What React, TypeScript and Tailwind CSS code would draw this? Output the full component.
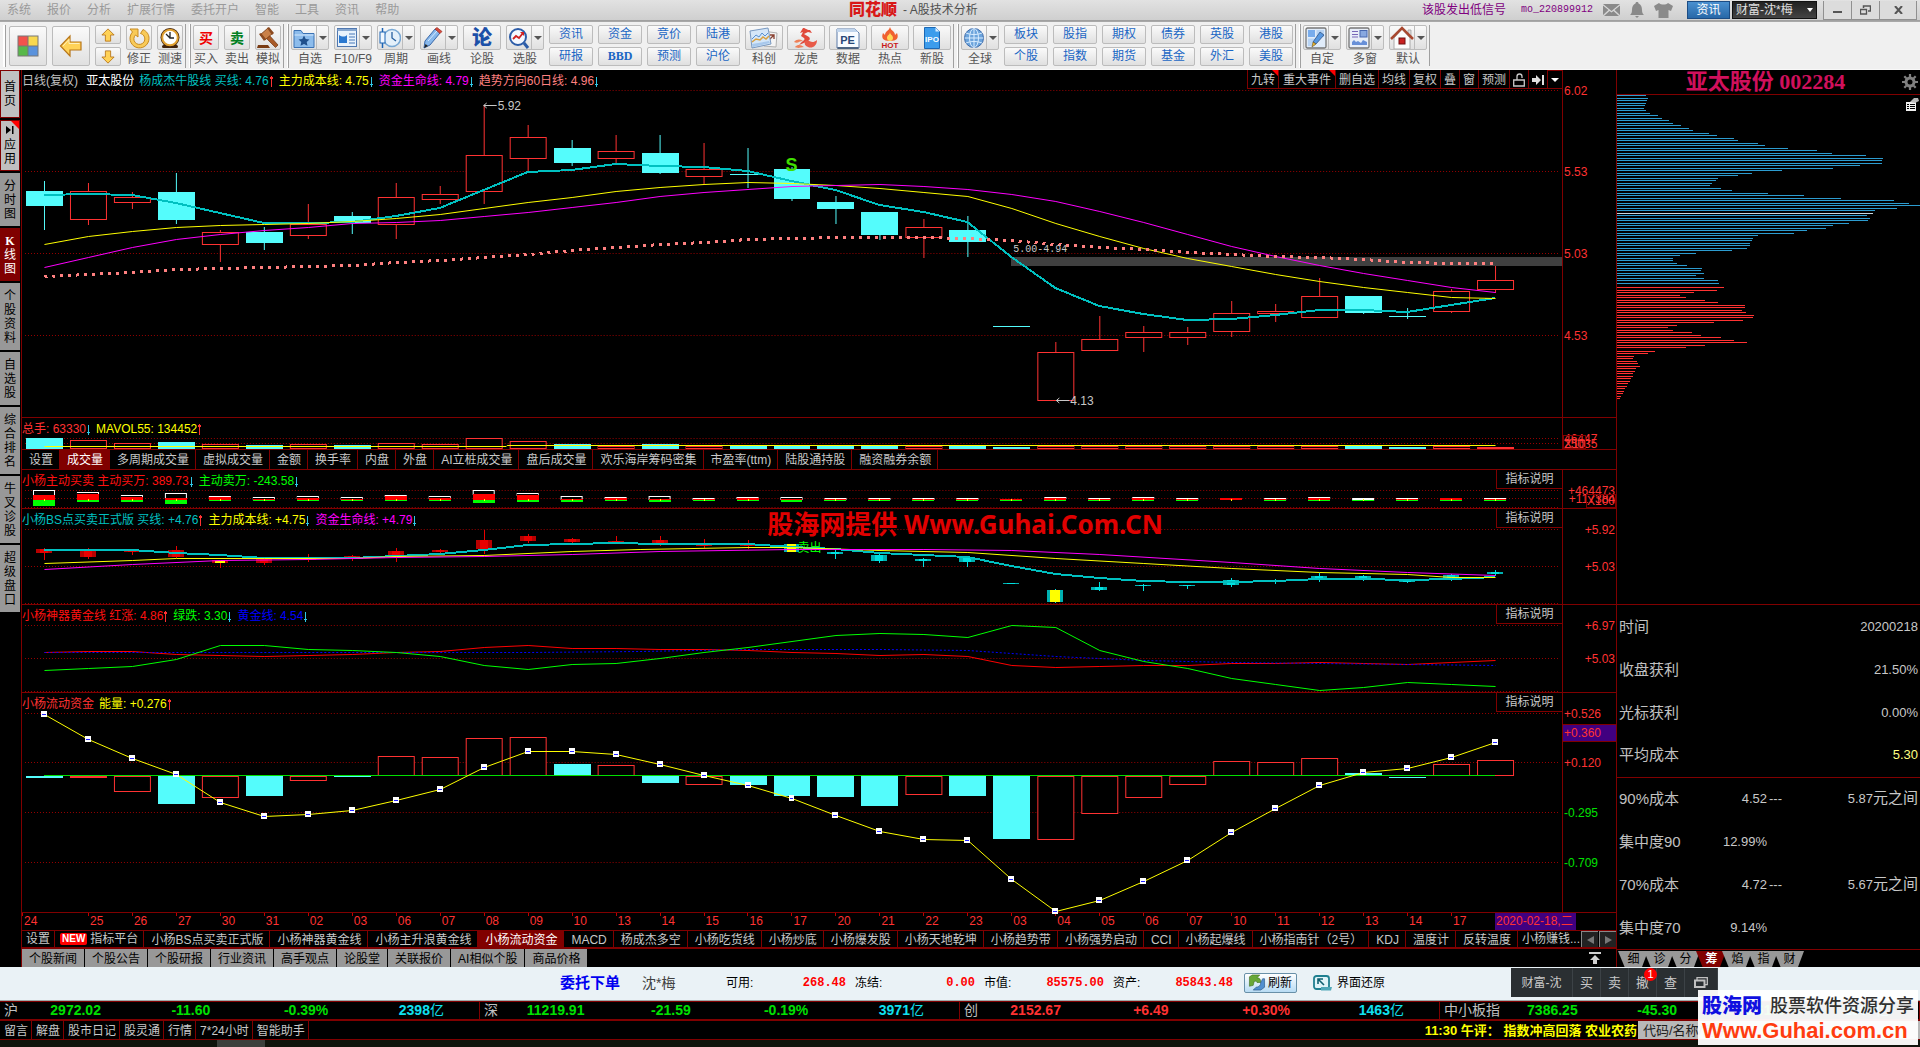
import type { ReactNode } from "react";

type Pt = [number, number];

const CYAN = "#54fcfc";
const TEAL = "#00c0c0";
const RED = "#ff3232";
const PINK = "#ff8080";

const dayX = (i: number) => 44 + 44 * i;
const byDay = (ys: number[]): Pt[] => ys.map((y, i) => [dayX(i), y]);
const toPoints = (pts: Pt[]) => pts.map((p) => p.join(",")).join(" ");

/* ---------- chart data ---------- */

// [high, top, bottom, low, falling]
const candles: [number, number, number, number, number][] = [
  [181, 191, 206, 230, 1], [183, 191, 219, 225, 0], [192, 197, 202, 209, 0], [173, 192, 220, 224, 1],
  [230, 232, 244, 262, 0], [227, 232, 243, 250, 1], [204, 224, 235, 239, 0], [212, 216, 223, 234, 1],
  [183, 197, 224, 239, 0], [186, 194, 199, 204, 0], [105, 155, 191, 204, 0], [125, 137, 158, 172, 0],
  [140, 148, 163, 166, 1], [135, 151, 158, 163, 0], [135, 153, 173, 174, 1], [143, 169, 176, 184, 0],
  [148, 174, 175, 188, 1], [167, 169, 199, 201, 1], [196, 202, 209, 224, 1], [212, 212, 235, 240, 1],
  [219, 227, 237, 258, 0], [216, 230, 242, 257, 1], [326, 326, 327, 327, 1], [342, 352, 400, 400, 0],
  [316, 339, 350, 350, 0], [326, 332, 337, 352, 0], [327, 332, 337, 345, 0], [301, 313, 331, 337, 0],
  [304, 311, 313, 322, 0], [278, 296, 317, 317, 0], [296, 296, 313, 314, 1], [308, 316, 317, 319, 1],
  [289, 291, 311, 313, 0], [266, 280, 289, 293, 0],
];
const priceTeal = byDay([195, 194, 195, 203, 213, 223, 223, 222, 216, 208, 190, 172, 170, 164, 166, 167, 171, 181, 190, 205, 212, 222, 257, 288, 306, 314, 320, 319, 315, 310, 310, 312, 305, 298]);
const priceYellow = byDay([244, 236, 231, 227, 225, 224, 223, 221, 218, 214, 208, 202, 197, 191, 187, 184, 182, 183, 185, 188, 192, 196, 208, 223, 236, 248, 258, 266, 274, 281, 287, 292, 297, 298]);
const priceMagenta = byDay([267, 257, 247, 239, 234, 230, 227, 223, 222, 220, 216, 212, 207, 202, 196, 192, 189, 186, 185, 184, 186, 189, 194, 201, 211, 222, 234, 246, 256, 265, 273, 280, 287, 292]);
const pricePink = byDay([276, 274, 272, 269, 268, 267, 266, 265, 262, 260, 257, 254, 250, 247, 244, 242, 239, 238, 237, 237, 237, 238, 240, 244, 247, 249, 252, 254, 256, 257, 259, 262, 263, 263]);

// [top, falling]
const volumes: Pt[] = [
  [438, 1], [440, 0], [443, 0], [442, 1], [444, 0], [445, 1], [444, 0], [445, 1], [443, 0], [444, 0], [438, 0], [441, 0],
  [444, 1], [446, 0], [444, 1], [446, 0], [446, 1], [446, 1], [446, 1], [446, 1], [446, 0], [446, 1], [447, 1], [446, 0],
  [446, 0], [446, 0], [446, 0], [446, 0], [446, 0], [446, 0], [446, 1], [447, 1], [446, 0], [447, 0],
];

// [outline top, red top, green bottom]
const orders: [number, number, number][] = [
  [490, 495, 506], [492, 494, 502], [495, 497, 502], [493, 498, 504], [496, 497, 501], [497, 499, 501], [496, 498, 501],
  [497, 499, 501], [495, 496, 501], [496, 498, 501], [490, 494, 503], [493, 495, 502], [496, 499, 502], [497, 498, 501],
  [496, 499, 502], [498, 499, 501], [497, 498, 501], [497, 499, 502], [498, 499, 501], [498, 499, 501], [498, 499, 501],
  [498, 499, 501], [499, 499, 501], [497, 498, 501], [498, 499, 501], [497, 498, 501], [498, 499, 501], [498, 498, 500],
  [498, 499, 501], [497, 498, 501], [498, 500, 501], [498, 499, 501], [498, 498, 501], [498, 499, 501],
];

// [high, top, bottom, low]
const bsCandles: [number, number, number, number][] = [
  [548, 549, 553, 560], [548, 550, 557, 559], [551, 551, 552, 555], [546, 550, 557, 558], [560, 560, 563, 568],
  [559, 559, 563, 565], [554, 558, 560, 562], [555, 556, 557, 561], [548, 551, 557, 562], [549, 550, 552, 553],
  [530, 540, 549, 554], [534, 536, 541, 543], [538, 539, 542, 543], [536, 541, 542, 543], [536, 540, 545, 546],
  [539, 545, 546, 548], [540, 545, 546, 549], [543, 544, 552, 553], [550, 552, 554, 559], [553, 555, 561, 563],
  [558, 559, 561, 567], [557, 558, 562, 567], [583, 583, 584, 584], [589, 590, 602, 603], [582, 587, 590, 591],
  [584, 585, 586, 591], [585, 585, 586, 589], [578, 580, 585, 587], [579, 581, 582, 584], [573, 576, 579, 582],
  [575, 576, 579, 581], [581, 581, 582, 583], [574, 575, 578, 581], [570, 572, 574, 576],
];
const bsTeal = byDay([550, 550, 550, 553, 555, 558, 558, 558, 556, 554, 550, 545, 544, 543, 544, 544, 544, 547, 549, 553, 555, 557, 566, 574, 578, 581, 582, 582, 581, 579, 579, 580, 579, 577]);
const bsYellow: Pt[] = [[44, 563], [132, 560], [176, 558], [264, 558], [352, 558], [396, 556], [484, 555], [572, 551], [640, 549], [748, 547], [792, 547], [880, 550], [968, 552], [1056, 558], [1144, 563], [1232, 568], [1320, 572], [1408, 574], [1452, 577], [1496, 577]];
const bsMagenta: Pt[] = [[44, 569], [132, 564], [220, 560], [308, 559], [396, 557], [484, 556], [572, 554], [660, 551], [792, 549], [924, 549], [1012, 550], [1100, 554], [1232, 562], [1320, 568], [1408, 572], [1496, 575]];

const goldRed = byDay([652, 651, 651, 654, 655, 656, 655, 654, 652, 651, 647, 645, 648, 648, 649, 649, 650, 652, 653, 655, 654, 656, 665, 667, 666, 665, 665, 663, 663, 662, 663, 664, 662, 660]);
const goldGreen = byDay([670, 668, 666, 659, 645, 645, 649, 650, 652, 656, 665, 669, 664, 663, 658, 652, 647, 641, 635, 633, 634, 637, 625, 627, 650, 661, 668, 678, 684, 690, 687, 682, 684, 686]);
const goldBlue: Pt[] = [[44, 652], [352, 652], [528, 652], [640, 651], [748, 649], [880, 649], [968, 650], [1012, 653], [1056, 656], [1100, 658], [1144, 660], [1232, 662], [1408, 664], [1496, 665]];

// [top, bottom, falling]
const flows: [number, number, number][] = [
  [776, 778, 1], [776, 777, 0], [776, 791, 0], [776, 804, 1], [776, 797, 0], [776, 796, 1], [776, 780, 0], [776, 777, 1],
  [756, 775, 0], [757, 775, 0], [738, 775, 0], [737, 775, 0], [764, 775, 1], [765, 775, 0], [776, 783, 1], [776, 784, 0],
  [776, 785, 1], [776, 796, 1], [776, 797, 1], [776, 806, 1], [776, 794, 0], [776, 796, 1], [776, 839, 1], [776, 839, 0],
  [776, 813, 0], [776, 797, 0], [776, 784, 0], [761, 775, 0], [762, 775, 0], [758, 775, 0], [773, 775, 1], [777, 778, 1],
  [764, 775, 0], [760, 775, 0],
];
const energy = byDay([714, 739, 758, 774, 802, 816, 814, 810, 800, 789, 767, 751, 751, 754, 764, 775, 785, 798, 815, 831, 839, 840, 879, 911, 900, 881, 860, 832, 808, 785, 772, 768, 757, 742]);

// chip distribution bar lengths, one bar every 5/2 rows
const chipsBlue = [29, 31, 30, 29, 28, 27, 29, 33, 41, 45, 52, 56, 64, 72, 76, 92, 100, 117, 121, 141, 148, 171, 200, 215, 249, 266, 265, 265, 243, 216, 165, 135, 121, 101, 99, 95, 93, 104, 115, 151, 187, 224, 277, 292, 303, 280, 258, 256, 250, 253, 251, 232, 216, 209, 190, 177, 141, 136, 135, 133, 133, 130, 115, 79, 63, 56, 56, 60, 70, 85, 84, 87, 79, 87, 101, 102];
const chipsRed = [107, 100, 77, 63, 69, 88, 101, 128, 128, 125, 129, 137, 136, 126, 97, 60, 51, 56, 75, 84, 104, 117, 130, 88, 69, 38, 31, 17, 16, 20, 21, 23, 19, 18, 16, 16, 14, 13, 11, 10, 8, 7, 6, 4, 3];

const dates = ["24", "25", "26", "27", "30", "31", "02", "03", "06", "07", "08", "09", "10", "13", "14", "15", "16", "17", "20", "21", "22", "23", "03", "04", "05", "06", "07", "10", "11", "12", "13", "14", "17"];

/* ---------- small pieces ---------- */

function Grid({ ys }: { ys: number[] }) {
  return (
    <>
      {ys.map((y) => (
        <line key={y} x1="25" x2="1561" y1={y + 0.5} y2={y + 0.5} stroke="#980000" strokeDasharray="1 2" />
      ))}
    </>
  );
}

// centres the stroke on whole pixel rows so that flat stretches stay bright
function Line({ pts, color, w = 1, dash }: { pts: Pt[]; color: string; w?: number; dash?: string }) {
  const shifted: Pt[] = w % 2 ? pts.map(([x, y]) => [x + 0.5, y + 0.5]) : pts;
  return <polyline points={toPoints(shifted)} fill="none" stroke={color} strokeWidth={w} strokeDasharray={dash} />;
}

function Plot({ top, height, children }: { top: number; height: number; children: ReactNode }) {
  return (
    <svg
      viewBox={`22 ${top} 1541 ${height}`}
      preserveAspectRatio="none"
      shapeRendering="crispEdges"
      className="absolute inset-0 h-full w-full overflow-visible"
    >
      {children}
    </svg>
  );
}

function Arrow({ up }: { up?: boolean }) {
  return up ? (
    <svg viewBox="0 0 6 13" className="h-[13px] w-[5px]" shapeRendering="crispEdges">
      <path d="M2 0h2v1h1v2H4v10H2V3H1V1h1z" fill={RED} />
    </svg>
  ) : (
    <svg viewBox="0 0 6 13" className="h-[13px] w-[5px]" shapeRendering="crispEdges">
      <path d="M2 1h2v9h1v1H4v2H2v-2H1v-1h1z" fill="#30c8e8" />
    </svg>
  );
}

interface Reading {
  text: string;
  color: string;
  dir?: "up" | "down";
}

function PanelHead({ items, help = true, children }: { items: Reading[]; help?: boolean; children?: ReactNode }) {
  return (
    <div className="flex h-[20px] items-start justify-between">
      <div className="flex items-center gap-[5px] whitespace-pre pt-[1px] leading-[20px]">
        {items.map((it) => (
          <span key={it.text} className="flex items-center" style={{ color: it.color }}>
            {it.text}
            {it.dir && <Arrow up={it.dir === "up"} />}
          </span>
        ))}
      </div>
      {children}
      {help && (
        <button className="h-[19px] w-[66px] border-b border-l border-[#800000] leading-[19px] text-[#c8c8c8]">指标说明</button>
      )}
    </div>
  );
}

function Panel({ className, head, plot, axis }: { className: string; head: ReactNode; plot: ReactNode; axis: ReactNode }) {
  return (
    <section className={"flex border-b border-[#800000] " + className}>
      <div className="flex min-w-0 flex-1 flex-col">
        {head}
        <div className="relative min-h-0 flex-1">{plot}</div>
      </div>
      <div className="relative w-[54px] shrink-0 border-l border-[#800000]">{axis}</div>
    </section>
  );
}

function AxisText({ top, height, labels, right }: { top: number; height: number; labels: [string, number, string?][]; right?: boolean }) {
  return (
    <svg viewBox={`0 ${top} 53 ${height}`} preserveAspectRatio="none" className="absolute inset-0 h-full w-full overflow-visible">
      {labels.map(([t, y, c]) => (
        <text key={t} x={right ? 52 : 1} y={y + 5} textAnchor={right ? "end" : "start"} fontSize="12" fill={c ?? RED}>
          {t}
        </text>
      ))}
    </svg>
  );
}

/* ---------- toolbar icons ---------- */

const svgIcon = "h-[22px] w-[22px]";
const yellowFill = "#ffd257";
const yellowEdge = "#b8761a";

const icons: Record<string, ReactNode> = {
  home: (
    <svg viewBox="0 0 22 22" className={svgIcon}>
      <rect x="0.5" y="0.5" width="21" height="21" fill="#777" />
      <rect x="1.5" y="1.5" width="9" height="9" fill="#f2524c" />
      <rect x="11.5" y="1.5" width="9" height="9" fill="#f8d850" />
      <rect x="1.5" y="11.5" width="9" height="9" fill="#58b84a" />
      <rect x="11.5" y="11.5" width="9" height="9" fill="#5a92dc" />
    </svg>
  ),
  back: (
    <svg viewBox="0 0 24 24" className="h-6 w-6">
      <path d="M1.500 12 11 2v6h11v8H11v6z" fill={yellowFill} stroke={yellowEdge} strokeWidth="1.200" />
      <path d="M4 12 10 5.500V9.500H20.500" fill="none" stroke="#fff0b8" />
    </svg>
  ),
  up: (
    <svg viewBox="0 0 16 16" className="h-[14px] w-[14px]">
      <path d="M8 1 15 8h-4v7H5V8H1z" fill={yellowFill} stroke={yellowEdge} />
    </svg>
  ),
  down: (
    <svg viewBox="0 0 16 16" className="h-[14px] w-[14px]">
      <path d="M8 15 1 8h4V1h6v7h4z" fill={yellowFill} stroke={yellowEdge} />
    </svg>
  ),
  fix: (
    <svg viewBox="0 0 22 22" className={svgIcon}>
      <path d="M2 2h8v8L7.500 8a5.500 5.500 0 1 0 8.500 1c-1-1.500-2-2-3.500-2.500L15 2.500c4 2 6 5 6 9A9.500 9.500 0 1 1 4.500 5z" fill="#f8ca58" stroke="#c88a20" />
    </svg>
  ),
  clock: (
    <svg viewBox="0 0 22 22" className={svgIcon}>
      <rect x="3" y="18" width="16" height="3" rx="1.500" fill="#40220c" />
      <circle cx="11" cy="10.500" r="9.500" fill="#40220c" />
      <circle cx="11" cy="10.500" r="7.800" fill="#fff" stroke="#e0a030" strokeWidth="2" />
      <path d="M11 5v6h4M11 11 7 7" stroke="#222" strokeWidth="1.300" fill="none" />
    </svg>
  ),
  gavel: (
    <svg viewBox="0 0 22 22" className={svgIcon}>
      <path d="m9 11 3-3 9 10-2.500 2.500z" fill="#a85a28" stroke="#70340e" strokeWidth=".7" />
      <path d="m3 8 8-7 5 5-8 7z" fill="#c98048" stroke="#70340e" strokeWidth=".8" />
      <path d="m2 7 2-1 5 6-2 2zM10 1l2-1 5 6-2 2z" fill="#8b4a20" />
      <path d="M1 18h10l2 3H0z" fill="#7a3c14" />
    </svg>
  ),
  folder: (
    <svg viewBox="0 0 22 22" className={svgIcon}>
      <path d="M1 3.500h7l2 3h11v14H1z" fill="#8cbcec" stroke="#3a72b4" />
      <path d="M1.500 8h19" stroke="#d4e8fc" />
      <path d="m11 8.500 1.700 3.500 3.800.4-2.800 2.600.8 3.800L11 17l-3.500 1.800.8-3.800-2.800-2.600 3.800-.4z" fill="#20508c" />
    </svg>
  ),
  doc: (
    <svg viewBox="0 0 22 22" className={svgIcon}>
      <rect x="1.500" y="1.500" width="19" height="18" fill="#e8f2fc" stroke="#5078b0" />
      <path d="M1.500 3h19" stroke="#88a8d0" strokeWidth="2" />
      <path d="M3 8c3 2 6 2 8 0v8H3z" fill="#2a78d0" />
      <path d="M13 7h6M13 10h6M13 13h6M13 16h6" stroke="#4878b8" />
    </svg>
  ),
  period: (
    <svg viewBox="0 0 22 22" className={svgIcon}>
      <circle cx="13" cy="11" r="8.500" fill="#e4f0fa" stroke="#78a8d4" strokeWidth="1.500" />
      <path d="M13 5v6l4 3" fill="none" stroke="#2860a0" strokeWidth="1.300" />
      <path d="M3.500 1v20" stroke="#1c64b4" strokeWidth="1.500" />
      <rect x="1" y="5" width="5" height="11" fill="#f0f8ff" stroke="#1c64b4" />
    </svg>
  ),
  pencil: (
    <svg viewBox="0 0 22 22" className={svgIcon}>
      <path d="m3 14 10-12 5 4L8 18l-6 3z" fill="#88b8ec" stroke="#3a68a8" />
      <path d="m13 2 2-1.500 5 4-2 2z" fill="#d84a3c" stroke="#983028" strokeWidth=".7" />
      <path d="m2 21 1.500-4 2.500 2z" fill="#222" />
      <path d="m6 14 9-10" stroke="#d8ecff" />
    </svg>
  ),
  forum: <span className="text-[20px] font-black leading-[22px] text-[#1c50a8]">论</span>,
  pick: (
    <svg viewBox="0 0 22 22" className={svgIcon}>
      <circle cx="10" cy="10" r="8" fill="#f4f8ff" stroke="#2c5ca8" strokeWidth="2" />
      <path d="m16 16 4 5" stroke="#2c5ca8" strokeWidth="3" />
      <path d="m5 12 3-3 3 2 4-5" fill="none" stroke="#d02020" strokeWidth="1.800" />
      <path d="M12 5h4v4z" fill="#d02020" />
    </svg>
  ),
  kechuang: (
    <svg viewBox="0 0 30 22" className="h-[22px] w-[30px]">
      <path d="m14 4 14 2-1 14-12-1z" fill="#f4f4f4" stroke="#b0b0b0" />
      <path d="m20 13 5-5m-4 0h4v4" stroke="#884030" fill="none" strokeWidth="1.300" />
      <path d="m1 4 18-3 3 16-19 4z" fill="#d4e6f8" stroke="#7898c0" />
      <path d="m3 12 4-4 3 2 3-4 3 3 3-3" fill="none" stroke="#5890d0" />
      <path d="m3 15 4-3 4 1 3-3 3 2 3-3" fill="none" stroke="#d8a040" strokeWidth="1.500" />
      <path d="m3 17 17-3 1 2-17 4z" fill="#a8c8ec" />
    </svg>
  ),
  dragon: (
    <svg viewBox="0 0 26 22" className="h-[22px] w-[26px]">
      <path d="M10 1c3 0 3 2 7 2l2 3-4-1-4 2 5 3c2 2 0 4-3 5l-7 3c3-4 7-5 5-7L8 9l2-4-3 1z" fill="#e04a3c" />
      <path d="M12 14c5-2 6 4 12-1 0 6-5 9-9 7-3-1-4-3-3-6z" fill="#e85a48" />
      <path d="M1 15c3-3 6-3 9-1-4 0-5 3-9 1zM2 20c3-3 6-2 9 0-4 0-5 2-9 0z" fill="#ee8058" />
    </svg>
  ),
  pe: (
    <svg viewBox="0 0 24 22" className="h-[22px] w-6">
      <path d="M1 2h18l4 4v15H1z" fill="#f8fbff" stroke="#5a7aa8" />
      <path d="M1 2h18l3 3H1z" fill="#c0d4ec" />
      <path d="M1.500 21h21" stroke="#304868" strokeWidth="1.500" />
      <text x="11.500" y="17" textAnchor="middle" fontSize="11" fontWeight="700" fill="#284878">PE</text>
    </svg>
  ),
  hot: (
    <svg viewBox="0 0 22 22" className={svgIcon}>
      <path d="M11 0c1 4 5 4 5 8l2-2c2 5 0 8-7 8S2 11 4 6l2 2c0-4 4-4 5-8z" fill="#f06030" />
      <path d="M11 5c0 3 3 3 3 6 0 4-6 4-6 0 0-3 3-3 3-6z" fill="#ffd858" />
      <text x="11" y="21" textAnchor="middle" fontSize="8" fontWeight="700" fill="#c81818">HOT</text>
    </svg>
  ),
  ipo: (
    <svg viewBox="0 0 18 22" className="h-[22px] w-[18px]">
      <path d="M1.500.5h11l4 4v17h-15z" fill="#3c9cec" stroke="#1c68b4" />
      <path d="M12.500.5v4h4z" fill="#d8ecff" />
      <text x="9" y="15" textAnchor="middle" fontSize="8" fontWeight="700" fill="#fff">IPO</text>
    </svg>
  ),
  globe: (
    <svg viewBox="0 0 22 22" className={svgIcon}>
      <circle cx="11" cy="11" r="9.500" fill="#6ca4dc" stroke="#3a68a8" />
      <ellipse cx="11" cy="11" rx="4.500" ry="9.500" fill="none" stroke="#d8ecff" />
      <path d="M1.500 11h19M3 6c5 2 11 2 16 0M3 16c5-2 11-2 16 0M11 1.500v19" stroke="#d8ecff" fill="none" />
    </svg>
  ),
  custom: (
    <svg viewBox="0 0 22 22" className={svgIcon}>
      <rect x="1" y="1" width="20" height="20" rx="1.500" fill="#e0ecfa" stroke="#777" strokeWidth="1.300" />
      <rect x="3" y="3" width="7" height="7" fill="#78acec" />
      <rect x="11.500" y="3" width="7.500" height="7" fill="#b8d4f4" />
      <rect x="3" y="11.500" width="7" height="7.500" fill="#b8d4f4" />
      <path d="M8 15 15 5l4 3-8 9z" fill="#5898e0" stroke="#284878" strokeWidth=".7" />
      <path d="m8 15 3 2-4 3z" fill="#e8b830" stroke="#604010" strokeWidth=".5" />
    </svg>
  ),
  multi: (
    <svg viewBox="0 0 22 22" className={svgIcon}>
      <rect x="1" y="1" width="20" height="20" rx="1.500" fill="#e8eef8" stroke="#777" strokeWidth="1.300" />
      <path d="M4 4.500h6M4 7.500h6M4 10h6" stroke="#7868b8" />
      <rect x="12" y="3.500" width="7" height="6.500" fill="#88a8e0" stroke="#4868b0" />
      <path d="M4 18v-3l2-2 2 2 2-1 3 2 2-3 4 2v3z" fill="#6890d8" />
    </svg>
  ),
  house: (
    <svg viewBox="0 0 24 24" className="h-6 w-6">
      <path d="M18 4h3v7h-3z" fill="#ddd" stroke="#999" strokeWidth=".7" />
      <path d="M4 12v11h16V12l-8-9z" fill="#fbfbfb" stroke="#aaa" />
      <path d="M1 13 12 2l11 11" fill="none" stroke="#a84830" strokeWidth="2.500" />
      <rect x="9" y="12" width="6" height="6" fill="#c82020" stroke="#701010" />
    </svg>
  ),
};

const frame = "border border-[#bcbcbc] rounded-[2px] bg-linear-to-b from-[#fafafa] to-[#e0e0e0]";

function Tool({ icon, label, split, small }: { icon: ReactNode; label: string; split?: boolean; small?: boolean }) {
  return (
    <button className={"flex h-[41px] shrink-0 flex-col items-center justify-between " + (small ? "w-[26px]" : "w-[38px]")}>
      <span className={"flex h-[25px] w-full items-stretch justify-center " + frame}>
        <span className="flex flex-1 items-center justify-center overflow-hidden">{icon}</span>
        {split && (
          <span className="flex w-[12px] items-center justify-center border-l border-[#bcbcbc]">
            <span className="border-x-4 border-t-4 border-x-transparent border-t-[#555]" />
          </span>
        )}
      </span>
      <span className="whitespace-nowrap leading-[13px] text-[#555]">{label}</span>
    </button>
  );
}

function PairGrid({ pairs }: { pairs: [string, string][] }) {
  return (
    <div className="flex gap-[5px]">
      {pairs.map(([a, b]) => (
        <div key={a} className="flex flex-col gap-[3px]">
          {[a, b].map((t) => (
            <button key={t} className={"h-[19px] w-[44px] leading-[17px] text-[#1a66c4] " + frame + (t === "BBD" ? " font-['Liberation_Serif',serif] font-bold" : "")}>
              {t}
            </button>
          ))}
        </div>
      ))}
    </div>
  );
}

const Divider = () => (
  <div className="mx-[2px] flex h-[44px] shrink-0 gap-[3px]">
    <div className="w-px bg-[#a0a0a0]" />
    <div className="w-[2px] border-r border-[#a0a0a0] bg-white" />
  </div>
);

/* ---------- page sections ---------- */

function TitleBar() {
  return (
    <header className="relative flex h-[21px] items-center justify-between border-b border-[#a0a0a0] bg-linear-to-b from-[#e2e2e2] to-[#cfcfcf]">
      <nav className="flex gap-4 pl-[7px] text-[#9a9a9a]">
        {["系统", "报价", "分析", "扩展行情", "委托开户", "智能", "工具", "资讯", "帮助"].map((m) => (
          <button key={m} className="whitespace-nowrap">{m}</button>
        ))}
      </nav>
      <h1 className="absolute left-1/2 flex -translate-x-[111px] items-center gap-[6px] whitespace-nowrap text-[#505050]">
        <span className="text-[16px] font-black leading-[18px] text-[#d81818]">同花顺</span>- A股技术分析
      </h1>
      <div className="flex items-center text-[#800080]">
        <span>该股发出低信号</span>
        <span className="ml-[15px] mr-[10px] font-['Liberation_Mono',monospace] text-[10px]">mo_220899912</span>
        <svg viewBox="0 0 17 12" className="mr-[10px] h-3 w-[17px]">
          <path d="M0 0h17L8.500 7zM0 1.500 5.500 6 0 11zM17 1.500 11.500 6 17 11zM1 12l5.500-5 2 1.500 2-1.500L16 12z" fill="#8a8a8a" />
        </svg>
        <svg viewBox="0 0 14 16" className="mr-[10px] h-4 w-[14px]">
          <path d="M7 0c1 0 1.500.5 1.500 1.500C11 2.500 12 5 12 8c0 3 1 4 2 5H0c1-1 2-2 2-5 0-3 1-5.500 3.500-6.500C5.500.5 6 0 7 0zM5 14h4l-2 2z" fill="#8a8a8a" />
        </svg>
        <svg viewBox="0 0 19 15" className="mr-[14px] h-[15px] w-[19px]">
          <path d="M5 0c2 2 7 2 9 0l5 3-2 5-2.500-1v8h-10V7L2 8 0 3z" fill="#8a8a8a" />
        </svg>
        <button className="h-[18px] w-[43px] border border-[#1c4c84] bg-linear-to-b from-[#4a90d0] to-[#2868a8] leading-[16px] text-white">资讯</button>
        <div className="relative mx-[2px]">
          <select aria-label="账户" className="h-[18px] w-[85px] appearance-none border border-[#111] bg-linear-to-b from-[#222] to-[#444] pl-[3px] leading-[16px] text-[#e0e0e0]">
            <option>财富-沈*梅</option>
          </select>
          <span className="pointer-events-none absolute right-1 top-[7px] border-x-[3px] border-t-4 border-x-transparent border-t-white" />
        </div>
        <div className="ml-1 mr-[3px] flex h-[19px] divide-x divide-[#909090] border border-t-0 border-[#909090] bg-[#dcdcdc] text-[#555]">
          <button aria-label="最小化" className="flex w-[28px] items-center justify-center">
            <span className="mt-1 h-[2px] w-[9px] bg-[#555]" />
          </button>
          <button aria-label="还原" className="flex w-[28px] items-center justify-center">
            <svg viewBox="0 0 11 10" className="h-[10px] w-[11px]" fill="none" stroke="#555">
              <path d="M3.500 3V1h7v5H8" strokeWidth="1.500" />
              <path d="M.5 4.500h6v4.500h-6z" strokeWidth="1.300" />
            </svg>
          </button>
          <button aria-label="关闭" className="flex w-[36px] items-center justify-center">
            <svg viewBox="0 0 9 8" className="h-2 w-[9px]" stroke="#555" strokeWidth="2">
              <path d="m1 0 7 8M8 0 1 8" />
            </svg>
          </button>
        </div>
      </div>
    </header>
  );
}

function Toolbar() {
  return (
    <div className="flex h-[49px] items-center border-b border-t border-b-[#f8f8f8] border-t-[#a8a8a8] bg-[#f0f0f0]">
      <div className="ml-[3px] mr-[3px] h-[42px] w-[3px] border-r border-[#a0a0a0] bg-white" />
      <div className="flex items-center gap-[5px]">
        <button aria-label="首页" className={"flex h-10 w-[38px] items-center justify-center " + frame}>{icons.home}</button>
        <button aria-label="后退" className={"flex h-10 w-[38px] items-center justify-center " + frame}>{icons.back}</button>
        <div className="flex flex-col gap-[3px]">
          <button aria-label="上翻" className={"flex h-[19px] w-[26px] items-center justify-center " + frame}>{icons.up}</button>
          <button aria-label="下翻" className={"flex h-[19px] w-[26px] items-center justify-center " + frame}>{icons.down}</button>
        </div>
        <Tool small icon={icons.fix} label="修正" />
        <Tool small icon={icons.clock} label="测速" />
      </div>
      <Divider />
      <div className="flex gap-[5px]">
        <Tool small icon={<span className="text-[14px] font-bold text-[#f00000]">买</span>} label="买入" />
        <Tool small icon={<span className="text-[14px] font-bold text-[#008020]">卖</span>} label="卖出" />
        <Tool small icon={icons.gavel} label="模拟" />
      </div>
      <Divider />
      <div className="flex gap-[5px]">
        <Tool split icon={icons.folder} label="自选" />
        <Tool split icon={icons.doc} label="F10/F9" />
        <Tool split icon={icons.period} label="周期" />
        <Tool split icon={icons.pencil} label="画线" />
        <Tool icon={icons.forum} label="论股" />
        <Tool split icon={icons.pick} label="选股" />
        <PairGrid pairs={[["资讯", "研报"], ["资金", "BBD"], ["竞价", "预测"], ["陆港", "沪伦"]]} />
        <div className="flex gap-1">
          <Tool icon={icons.kechuang} label="科创" />
          <Tool icon={icons.dragon} label="龙虎" />
          <Tool icon={icons.pe} label="数据" />
          <Tool icon={icons.hot} label="热点" />
          <Tool icon={icons.ipo} label="新股" />
        </div>
      </div>
      <Divider />
      <div className="flex gap-[5px]">
        <Tool split icon={icons.globe} label="全球" />
        <PairGrid pairs={[["板块", "个股"], ["股指", "指数"], ["期权", "期货"], ["债券", "基金"], ["英股", "外汇"], ["港股", "美股"]]} />
      </div>
      <Divider />
      <div className="flex gap-[5px] border-r border-[#a0a0a0] pr-[2px]">
        <Tool split icon={icons.custom} label="自定" />
        <Tool split icon={icons.multi} label="多窗" />
        <Tool split icon={icons.house} label="默认" />
      </div>
    </div>
  );
}

function SideTabs() {
  const rest = ["个股资料", "自选股", "综合排名", "牛叉诊股", "超级盘口"];
  const grey = "w-full bg-[#989898] px-[3px] pb-[5px] pt-[6px] text-black";
  const ch = "mx-auto block w-[12px] break-all leading-[14px]";
  return (
    <nav className="flex w-[22px] shrink-0 flex-col gap-[2px] border-r border-[#800000] pr-[1px]">
      <button className="w-full border border-[#800000] bg-[#c0c0c0] py-[9px] text-black"><span className={ch}>首页</span></button>
      <button className="relative w-full border border-[#800000] bg-[#c0c0c0] pb-1 pt-[5px] text-black">
        <span className="absolute right-0 top-0 border-l-8 border-t-8 border-l-transparent border-t-[#ff0000]" />
        <svg viewBox="0 0 8 8" className="mx-auto mb-1 h-2 w-2"><path d="M0 0v8l5-4zM6 0h1.500v8H6z" fill="#000" /></svg>
        <span className={ch}>应用</span>
      </button>
      <button className={grey}><span className={ch}>分时图</span></button>
      <button className="w-full bg-[#800000] px-[3px] pb-[5px] pt-[6px] text-white"><span className={ch}><b className="font-['Liberation_Serif',serif]">K</b>线图</span></button>
      {rest.map((t) => (
        <button key={t} className={grey}><span className={ch}>{t}</span></button>
      ))}
    </nav>
  );
}

function ChartTools() {
  const cell = "flex h-[19px] items-center border-l border-b border-[#800000] pt-[1px] whitespace-nowrap";
  return (
    <div className="flex text-[#c8c8c8]">
      <button className={cell + " relative px-[3px]"}>
        九转<span className="absolute right-0 top-0 border-l-[6px] border-t-[6px] border-l-transparent border-t-[#ff0000]" />
      </button>
      <button className={cell + " relative px-1"}>
        重大事件<span className="absolute right-0 top-0 border-l-[6px] border-t-[6px] border-l-transparent border-t-[#ff0000]" />
      </button>
      {["删自选", "均线", "复权", "叠", "窗", "预测"].map((t) => (
        <button key={t} className={cell + " px-[3px]"}>{t}</button>
      ))}
      <button aria-label="锁定" className={cell + " w-[19px] justify-center"}>
        <svg viewBox="0 0 12 14" className="h-[14px] w-3" fill="none" stroke="#c8c8c8" strokeWidth="1.300"><path d="M.7 7h10.600v6H.7zM4 7V3.500a2.500 2.500 0 0 1 5 0V5" /></svg>
      </button>
      <button aria-label="末尾" className={cell + " w-[19px] justify-center"}>
        <svg viewBox="0 0 12 10" className="h-[10px] w-3" fill="#e0e0e0"><path d="M0 3h4V0l5 5-5 5V7H0zM10 0h2v10h-2z" /></svg>
      </button>
      <button aria-label="更多" className={cell + " w-[15px] justify-center border-t"}>
        <span className="border-x-4 border-t-4 border-x-transparent border-t-white" />
      </button>
    </div>
  );
}

function TabStrip({ tabs, active }: { tabs: string[]; active: string }) {
  return (
    <>
      {tabs.map((t) => (
        <button
          key={t}
          className={"h-full shrink-0 whitespace-nowrap border-r border-[#800000] pl-[7px] pr-[6px] pt-[1px] " + (t === active ? "bg-[#800000] text-white" : "text-[#c8c8c8]")}
        >
          {t}
        </button>
      ))}
    </>
  );
}

function Body({ x, top, bottom, fall }: { x: number; top: number; bottom: number; fall: boolean }) {
  return fall ? (
    <rect x={x - 18} y={top} width="37" height={Math.max(1, bottom - top)} fill={CYAN} />
  ) : (
    <rect x={x - 17.5} y={top + 0.5} width="36" height={Math.max(1, bottom - top)} fill="#000" stroke={RED} />
  );
}

function PricePanel() {
  return (
    <Panel
      className="min-h-[348px] flex-1"
      head={
        <PanelHead
          help={false}
          items={[
            { text: "日线(复权) ", color: "#c0c0c0" },
            { text: "亚太股份", color: "#ffffff" },
            { text: "杨成杰牛股线 买线: 4.76", color: TEAL, dir: "up" },
            { text: "主力成本线: 4.75", color: "#ffff00", dir: "down" },
            { text: "资金生命线: 4.79", color: "#ff00ff", dir: "down" },
            { text: "趋势方向60日线: 4.96", color: PINK, dir: "down" },
          ]}
        >
          <ChartTools />
        </PanelHead>
      }
      plot={
        <Plot top={90} height={327}>
          <Grid ys={[90, 171, 253, 335]} />
          <rect x="1012" y="257" width="551" height="9" fill="#404040" />
          {candles.map(([h, t, b, l, f], i) => (
            <g key={i}>
              <line x1={dayX(i) + 0.5} x2={dayX(i) + 0.5} y1={h} y2={l} stroke={f ? CYAN : RED} />
              <Body x={dayX(i)} top={t} bottom={b} fall={f === 1} />
            </g>
          ))}
          <Line pts={priceTeal} color={TEAL} w={2} />
          <Line pts={priceYellow} color="#ffff00" />
          <Line pts={priceMagenta} color="#ff00ff" />
          <Line pts={pricePink} color={PINK} w={3} dash="3 5" />
          <path d="M484 105.500h13M487 103l-3 2.500 3 2.500M1057 400.500h13M1060 398l-3 2.500 3 2.500" stroke="#c8c8c8" fill="none" />
          <g fill="#c8c8c8" fontSize="12">
            <text x="498" y="110">5.92</text>
            <text x="1071" y="405">4.13</text>
            <text x="1014" y="252" fontSize="10" fontFamily="Liberation Mono">5.00-4.94</text>
          </g>
          <text x="792" y="171" textAnchor="middle" fontSize="18" fontWeight="700" fill="#40e000">S</text>
        </Plot>
      }
      axis={<AxisText top={70} height={347} labels={[["6.02", 90], ["5.53", 171], ["5.03", 253], ["4.53", 335]]} />}
    />
  );
}

function VolumePanel() {
  return (
    <Panel
      className="h-[32px]"
      head={<PanelHead help={false} items={[{ text: "总手: 63330", color: RED, dir: "down" }, { text: "MAVOL55: 134452", color: "#ffff00", dir: "up" }]} />}
      plot={
        <Plot top={438} height={11}>
          <Grid ys={[438, 443]} />
          {volumes.map(([t, f], i) => <Body key={i} x={dayX(i)} top={t} bottom={f ? 449 : 448} fall={f === 1} />)}
          <Line pts={[[44, 446], [506, 446], [507, 445], [1496, 445]]} color="#ffff00" />
        </Plot>
      }
      axis={
        <>
          <AxisText top={418} height={31} labels={[["46447", 438], ["25035", 443], ["X10", 443]]} />
          <span className="absolute bottom-0 left-0 h-[14px] w-[23px] border border-[#800000]" />
        </>
      }
    />
  );
}

function OrderPanel() {
  return (
    <Panel
      className="h-[39px]"
      head={<PanelHead items={[{ text: "小杨主动买卖 主动买万: 389.73", color: "#ff1010", dir: "down" }, { text: "主动卖万: -243.58", color: "#00ff00", dir: "down" }]} />}
      plot={
        <Plot top={490} height={18}>
          <Grid ys={[490, 498, 507]} />
          {orders.map(([w, r, g], i) => (
            <g key={i}>
              {w < r && <rect x={dayX(i) - 10.500} y={w + 0.5} width="21" height={r - w} fill={i === 30 ? "#fff" : "#000"} stroke="#fff" />}
              <rect x={dayX(i) - 11} y={r} width="22" height={500 - r} fill="#ff0000" />
              <rect x={dayX(i) - 11} y="500" width="22" height={g - 500} fill="#00ff00" />
              <rect x={dayX(i)} y="499" width="1" height="2" fill="#ffff00" />
            </g>
          ))}
        </Plot>
      }
      axis={
        <>
          <AxisText right top={470} height={38} labels={[["+464473", 490], ["+117384", 498], ["X100", 500]]} />
          <span className="absolute bottom-0 right-0 h-[14px] w-[30px] border border-[#800000]" />
        </>
      }
    />
  );
}

function BsPanel() {
  return (
    <Panel
      className="relative h-[96px]"
      head={
        <PanelHead
          items={[
            { text: "小杨BS点买卖正式版 买线: +4.76", color: TEAL, dir: "up" },
            { text: "主力成本线: +4.75", color: "#ffff00", dir: "down" },
            { text: "资金生命线: +4.79", color: "#ff00ff", dir: "down" },
          ]}
        />
      }
      plot={
        <>
          <Plot top={529} height={75}>
            <Grid ys={[529, 566, 603]} />
            {bsCandles.map(([h, t, b, l], i) => {
              const c = i < 17 ? "#e80000" : "#00e0e0";
              const x = dayX(i);
              return (
                <g key={i}>
                  <rect x={x} y={h} width="1" height={l - h} fill={c} />
                  <rect x={x - 8} y={t} width="16" height={b - t} fill={i < 17 ? "#b80000" : "#00b0b0"} />
                  <rect x={x - 4} y={t} width="8" height={b - t} fill={c} />
                  {(i === 4 || i === 17 || i === 23) && <rect x={x - 5} y={i === 4 ? t + 1 : t} width="10" height={i === 4 ? 2 : b - t} fill="#ffff00" />}
                </g>
              );
            })}
            <text x="798" y="552" fontSize="12" fill="#00ff00">卖出</text>
            <Line pts={bsTeal} color={TEAL} w={2} />
            <Line pts={bsYellow} color="#ffff00" />
            <Line pts={bsMagenta} color="#ff00ff" />
          </Plot>
          <p className="absolute left-[48.400%] top-[-20px] whitespace-nowrap font-['Noto_Sans','Noto_Sans_CJK_SC',sans-serif] text-[26px] font-bold leading-[30px] text-[#e00000]">
            股海网提供 Www.Guhai.Com.CN
          </p>
        </>
      }
      axis={<AxisText right top={509} height={95} labels={[["+5.92", 529], ["+5.03", 566]]} />}
    />
  );
}

function GoldPanel() {
  return (
    <Panel
      className="h-[88px]"
      head={
        <PanelHead
          items={[
            { text: "小杨神器黄金线 红涨: 4.86", color: "#ff1010", dir: "up" },
            { text: "绿跌: 3.30", color: "#00ff00", dir: "down" },
            { text: "黄金线: 4.54", color: "#0000ff", dir: "down" },
          ]}
        />
      }
      plot={
        <Plot top={625} height={67}>
          <Grid ys={[625, 658, 691]} />
          <Line pts={goldRed} color="#ff0000" />
          <Line pts={goldBlue} color="#0000ff" dash="2 2" />
          <Line pts={goldGreen} color="#00ff00" />
        </Plot>
      }
      axis={<AxisText right top={605} height={87} labels={[["+6.97", 625], ["+5.03", 658]]} />}
    />
  );
}

function FlowPanel() {
  return (
    <Panel
      className="h-[220px]"
      head={<PanelHead items={[{ text: "小杨流动资金", color: RED }, { text: "能量: +0.276", color: "#ffff00", dir: "up" }]} />}
      plot={
        <Plot top={713} height={199}>
          <Grid ys={[713, 762, 812, 862]} />
          {flows.map(([t, b, f], i) => <Body key={i} x={dayX(i)} top={t} bottom={b} fall={f === 1} />)}
          <line x1="44" x2="1496" y1="775.500" y2="775.500" stroke="#00e000" />
          <Line pts={energy} color="#ffff00" />
          {energy.map(([x, y]) => (
            <g key={x}>
              <rect x={x - 3} y={y - 3} width="6" height="6" fill="#fff" />
              <rect x={x - 2} y={y} width="4" height="1" fill="#2020ff" />
            </g>
          ))}
        </Plot>
      }
      axis={
        <>
          <span className="absolute inset-x-0 top-[31px] h-[18px] border-y border-[#800000] bg-[#400080]" />
          <AxisText
            top={693}
            height={219}
            labels={[["+0.526", 713], ["+0.360", 732], ["+0.120", 762], ["-0.295", 812, "#00e000"], ["-0.709", 862, "#00e000"]]}
          />
        </>
      }
    />
  );
}

function DateAxis() {
  const tick = "block bg-[linear-gradient(#c00000,#c00000)] bg-[length:1px_3px] bg-left-top bg-no-repeat pl-[2px]";
  return (
    <div className="flex h-[17px] leading-[17px] text-[#ff3232]">
      <div className="flex min-w-0 flex-1">
        {dates.map((d, i) => (
          <span key={i} className={"w-0 " + (i === 0 ? "grow-66" : "grow-44")}>
            <span className={tick}>{d}</span>
          </span>
        ))}
        <span className="w-0 grow-67">
          <span className="block h-[17px] w-[81px] whitespace-nowrap bg-[#400080] pl-[1px]">2020-02-18,二</span>
        </span>
      </div>
      <div className="w-[54px] shrink-0" />
    </div>
  );
}

const volumeTabs = ["设置", "成交量", "多周期成交量", "虚拟成交量", "金额", "换手率", "内盘", "外盘", "AI立桩成交量", "盘后成交量", "欢乐海岸筹码密集", "市盈率(ttm)", "陆股通持股", "融资融券余额"];
const indicatorTabs = ["小杨BS点买卖正式版", "小杨神器黄金线", "小杨主升浪黄金线", "小杨流动资金", "MACD", "杨成杰多空", "小杨吃货线", "小杨炒底", "小杨爆发股", "小杨天地乾坤", "小杨趋势带", "小杨强势启动", "CCI", "小杨起爆线", "小杨指南针（2号）", "KDJ", "温度计", "反转温度"];
const infoTabs = ["个股新闻", "个股公告", "个股研报", "行业资讯", "高手观点", "论股堂", "关联报价", "AI相似个股", "商品价格"];

function ChartColumn() {
  return (
    <main className="flex min-w-0 flex-1 flex-col border-r border-[#800000]">
      <PricePanel />
      <VolumePanel />
      <div className="flex h-[20px] overflow-hidden border-b border-[#800000]">
        <TabStrip tabs={volumeTabs} active="成交量" />
      </div>
      <OrderPanel />
      <BsPanel />
      <GoldPanel />
      <FlowPanel />
      <DateAxis />
      <div className="flex h-[19px] border-b-2 border-t border-[#800000]">
        <div className="flex min-w-0 flex-1 overflow-hidden">
          <button className="shrink-0 border-r border-[#800000] px-[4px] text-[#c8c8c8]">设置</button>
          <button className="flex shrink-0 items-center gap-[3px] border-r border-[#800000] px-[5px] text-[#c8c8c8]">
            <span className="rounded-[2px] bg-[#ff0000] px-[2px] text-[10px] font-bold leading-[12px] text-white">NEW</span>指标平台
          </button>
          <TabStrip tabs={indicatorTabs} active="小杨流动资金" />
          <button className="min-w-0 whitespace-nowrap pl-[4px] text-[#c8c8c8]">小杨赚钱...</button>
        </div>
        <button aria-label="向左" className="flex w-[17px] items-center justify-center border-l border-t border-[#888] bg-[#222]">
          <span className="border-y-4 border-r-[7px] border-y-transparent border-r-[#777]" />
        </button>
        <button aria-label="向右" className="ml-px flex w-[17px] items-center justify-center border-l border-t border-[#888] bg-[#222]">
          <span className="border-y-4 border-l-[7px] border-y-transparent border-l-[#777]" />
        </button>
      </div>
      <div className="flex h-[18px] items-center justify-between">
        <div className="flex h-full gap-px">
          {infoTabs.map((t) => (
            <button key={t} className="whitespace-nowrap bg-[#989898] px-[7px] pt-[1px] text-black">{t}</button>
          ))}
        </div>
        <button aria-label="展开" className="mr-[15px]">
          <svg viewBox="0 0 12 12" className="h-3 w-3" fill="#d0d0d0"><path d="M0 0h12v2H0zM6 3l5 5H8v4H4V8H1z" /></svg>
        </button>
      </div>
    </main>
  );
}

function Stat({ name, mid, value, tone = "text-[#c8c8c8]" }: { name: string; mid?: string; value?: string; tone?: string }) {
  return (
    <tr className="h-[43px]">
      <th scope="row" className="w-[84px] pl-[2px] text-left text-[15px] font-normal text-[#c0c0c0]">{name}</th>
      <td className="w-[66px] text-right">{mid}</td>
      <td className="w-[18px] pl-[2px]">{name.includes("成本") && mid ? "---" : ""}</td>
      <td className={"pr-[2px] text-right " + tone}>
        {value?.replace("元之间", "")}
        {value?.includes("元之间") && <span className="text-[15px]">元之间</span>}
      </td>
    </tr>
  );
}

function ChipColumn() {
  const tabs = ["细", "诊", "分", "筹", "焰", "指", "财"];
  return (
    <aside className="flex w-[303px] shrink-0 flex-col">
      <div className="relative flex h-[25px] items-center justify-center border-b border-[#800000]">
        <h2 className="whitespace-nowrap pr-[6px] font-['Liberation_Serif','Noto_Sans_CJK_SC',serif] text-[22px] font-bold leading-[22px] text-[#d0105c]">亚太股份 002284</h2>
        <button aria-label="设置" className="absolute right-[2px] top-1">
          <svg viewBox="0 0 16 16" className="h-4 w-4" fill="none" stroke="#808080">
            <circle cx="8" cy="8" r="4" strokeWidth="3" />
            <path d="M8 0v3M8 13v3M0 8h3M13 8h3M2.300 2.300l2 2M11.700 11.700l2 2M2.300 13.700l2-2M11.700 4.300l2-2" strokeWidth="2.200" />
          </svg>
        </button>
      </div>
      <div className="relative min-h-[420px] flex-1 border-b border-[#800000]">
        <svg viewBox="0 95 303 508" preserveAspectRatio="none" shapeRendering="crispEdges" className="absolute inset-0 h-full w-full">
          {chipsBlue.map((w, i) => (
            <rect key={i} x="0" y={Math.round(95 + i * 2.5)} width={w} height="1" fill={i === 47 ? "#c8d8e0" : "#2c9cd0"} />
          ))}
          {chipsRed.map((w, i) => (
            <rect key={i} x="0" y={Math.round(287 + i * 2.5)} width={w} height="1" fill={RED} />
          ))}
        </svg>
        <svg viewBox="0 0 14 13" className="absolute right-[1px] top-[3px] h-[13px] w-[14px]">
          <path d="M1 4h10v9H1z" fill="#f0f0f0" />
          <path d="m5 4 4-4h4l1 3-4 2z" fill="#b8b8b8" />
          <path d="M2 6.500h2M5 6.500h5M2 8.500h2M5 8.500h5M2 10.500h2M5 10.500h5" stroke="#000" />
        </svg>
      </div>
      <table className="w-full text-[13px] text-[#c8c8c8]">
        <tbody className="border-b border-[#800000]">
          <Stat name="时间" value="20200218" />
          <Stat name="收盘获利" value="21.50%" />
          <Stat name="光标获利" value="0.00%" />
          <Stat name="平均成本" value="5.30" tone="text-[#ffff80]" />
        </tbody>
        <tbody>
          <Stat name="90%成本" mid="4.52" value="5.87元之间" />
          <Stat name="集中度90" mid="12.99%" />
          <Stat name="70%成本" mid="4.72" value="5.67元之间" />
          <Stat name="集中度70" mid="9.14%" />
        </tbody>
      </table>
      <div className="flex h-[18px] items-end border-t border-[#800000] pl-[1px]">
        {tabs.map((t) => (
          <button
            key={t}
            className={
              "-mr-[4px] h-[16px] w-[30px] pl-[1px] leading-[17px] [clip-path:polygon(0_0,100%_0,80%_100%,22%_100%)] " +
              (t === "筹" ? "relative bg-[#800000] font-bold text-white" : "bg-[#989898] text-black")
            }
          >
            {t}
          </button>
        ))}
      </div>
    </aside>
  );
}

function TradeBar() {
  const money: [string, string][] = [["可用:", "268.48"], ["冻结:", "0.00"], ["市值:", "85575.00"], ["资产:", "85843.48"]];
  return (
    <div className="flex h-[34px] items-center border-b border-[#a0a8a8] bg-[#eaf2f6] pb-[2px] text-black">
      <button className="ml-[560px] text-[15px] font-bold text-[#0000f0]">委托下单</button>
      <span className="ml-[22px] w-[84px] text-[14px] text-[#404040]">沈*梅</span>
      <div className="flex gap-[9px]">
        {money.map(([k, v]) => (
          <div key={k} className="flex w-[120px] items-center justify-between">
            <span>{k}</span>
            <span className="font-['Liberation_Mono',monospace] font-bold text-[#ff0000]">{v}</span>
          </div>
        ))}
      </div>
      <button className="ml-[11px] flex h-[20px] w-[53px] items-center gap-[2px] rounded-[2px] border border-[#6890a8] bg-linear-to-b from-white to-[#b8dcf4] pl-[3px]">
        <svg viewBox="0 0 18 18" className="h-[17px] w-[18px] shrink-0">
          <path d="M1 3 4 1h8l-3 3c3 0 4 2 4 5H9C9 8 8 7 6 8l-1 4-4 1z" fill="#68a838" stroke="#386818" strokeWidth=".6" />
          <path d="M17 5v9l-4 3H5l3-3c3 0 5-2 5-5l2-4z" fill="#5090d0" stroke="#204878" strokeWidth=".6" />
        </svg>
        刷新
      </button>
      <button className="ml-[16px] flex items-center gap-1">
        <svg viewBox="0 0 20 16" className="h-4 w-5">
          <rect x="1" y="1" width="15" height="13" rx="2.500" fill="#e0f4f8" stroke="#208090" strokeWidth="1.800" />
          <path d="M5 9V4h5M5 4l6 6" stroke="#106070" strokeWidth="1.600" fill="none" />
          <path d="M8 12h11l-1 3.500H8z" fill="#50a8b8" />
        </svg>
        界面还原
      </button>
      <div className="relative ml-auto mr-[202px] flex h-[29px] divide-x divide-[#3c4246] bg-[#2a2f32] text-[#c8c8c8]">
        <button className="w-[62px] whitespace-nowrap">财富-沈</button>
        {["买", "卖", "撤", "查"].map((t) => (
          <button key={t} className="w-[28px] text-[13px]">{t}</button>
        ))}
        <button aria-label="窗口" className="flex w-[33px] items-center justify-center">
          <svg viewBox="0 0 14 11" className="h-[11px] w-[14px]" fill="none" stroke="#c0c0c0"><path d="M3 3V.7h10.300v7H11" strokeWidth="1.300" /><path d="M1 3.500h9.500V10H1z" strokeWidth="2" /></svg>
        </button>
        <span className="absolute left-[133px] top-0 flex h-[13px] w-[13px] items-center justify-center rounded-full bg-[#ff0000] text-[11px] leading-none text-white">1</span>
      </div>
    </div>
  );
}

const indexes: { name: string; cells: string[]; tone: string; amount: string }[] = [
  { name: "沪", cells: ["2972.02", "-11.60", "-0.39%"], tone: "text-[#00e000]", amount: "2398" },
  { name: "深", cells: ["11219.91", "-21.59", "-0.19%"], tone: "text-[#00e000]", amount: "3971" },
  { name: "创", cells: ["2152.67", "+6.49", "+0.30%"], tone: "text-[#ff3232]", amount: "1463" },
  { name: "中小板指", cells: ["7386.25", "-45.30", "-0.61%"], tone: "text-[#00e000]", amount: "1567" },
];

function IndexBar() {
  return (
    <div className="flex h-[20px] items-center border-b-2 border-t border-[#800000] text-[14px] leading-[17px]">
      {indexes.map((g) => (
        <div key={g.name} className="flex h-full flex-1 items-center border-r border-[#800000] pl-1">
          <span className="shrink-0 text-[#c0c0c0]">{g.name}</span>
          {g.cells.map((c) => (
            <span key={c} className={"flex-1 text-center font-bold " + g.tone}>{c}</span>
          ))}
          <span className="flex-1 text-center text-[#10e0f0]"><b>{g.amount}</b>亿</span>
        </div>
      ))}
    </div>
  );
}

function NewsBar() {
  return (
    <div className="flex h-[19px] items-center justify-between border-b border-[#800000]">
      <nav className="flex h-full text-[#c8c8c8]">
        {["留言", "解盘", "股市日记", "股灵通", "行情", "7*24小时", "智能助手"].map((t) => (
          <button key={t} className="whitespace-nowrap border-r border-[#800000] pl-[4px] pr-[3px] pt-[1px]">{t}</button>
        ))}
      </nav>
      <div className="flex h-full items-center">
        <a href="#news" className="whitespace-nowrap pt-[1px] text-[13px] font-bold text-[#ffff00]">11:30 午评： 指数冲高回落 农业农药</a>
        <input aria-label="代码/名称" placeholder="代码/名称/简拼" className="ml-px h-full w-[282px] bg-[#b8b8b8] pl-[5px] text-[13px] text-black placeholder:text-[#202020]" />
      </div>
    </div>
  );
}

export default function App() {
  return (
    <div className="relative flex min-h-screen flex-col overflow-hidden bg-black font-['Liberation_Sans','Noto_Sans_CJK_SC',sans-serif] text-[12px] leading-[16px]">
      <TitleBar />
      <Toolbar />
      <div className="flex flex-1">
        <SideTabs />
        <ChartColumn />
        <ChipColumn />
      </div>
      <TradeBar />
      <IndexBar />
      <NewsBar />
      <div className="h-[7px] bg-[#10140c] pl-[217px]">
        <div className="h-full w-[48px] bg-[#3c403c]" />
      </div>
      <div className="absolute bottom-[2px] right-[2px] h-[55px] w-[220px] bg-white/95 px-1 pt-[5px]">
        <div className="flex items-center justify-between whitespace-nowrap leading-[23px]">
          <span className="text-[20px] font-black text-[#1010e0]">股海网</span>
          <span className="text-[18px] font-medium text-[#303030]">股票软件资源分享</span>
        </div>
        <div className="whitespace-nowrap text-[22px] font-bold leading-[25px] text-[#ff3c10]">Www.Guhai.com.cn</div>
      </div>
    </div>
  );
}
